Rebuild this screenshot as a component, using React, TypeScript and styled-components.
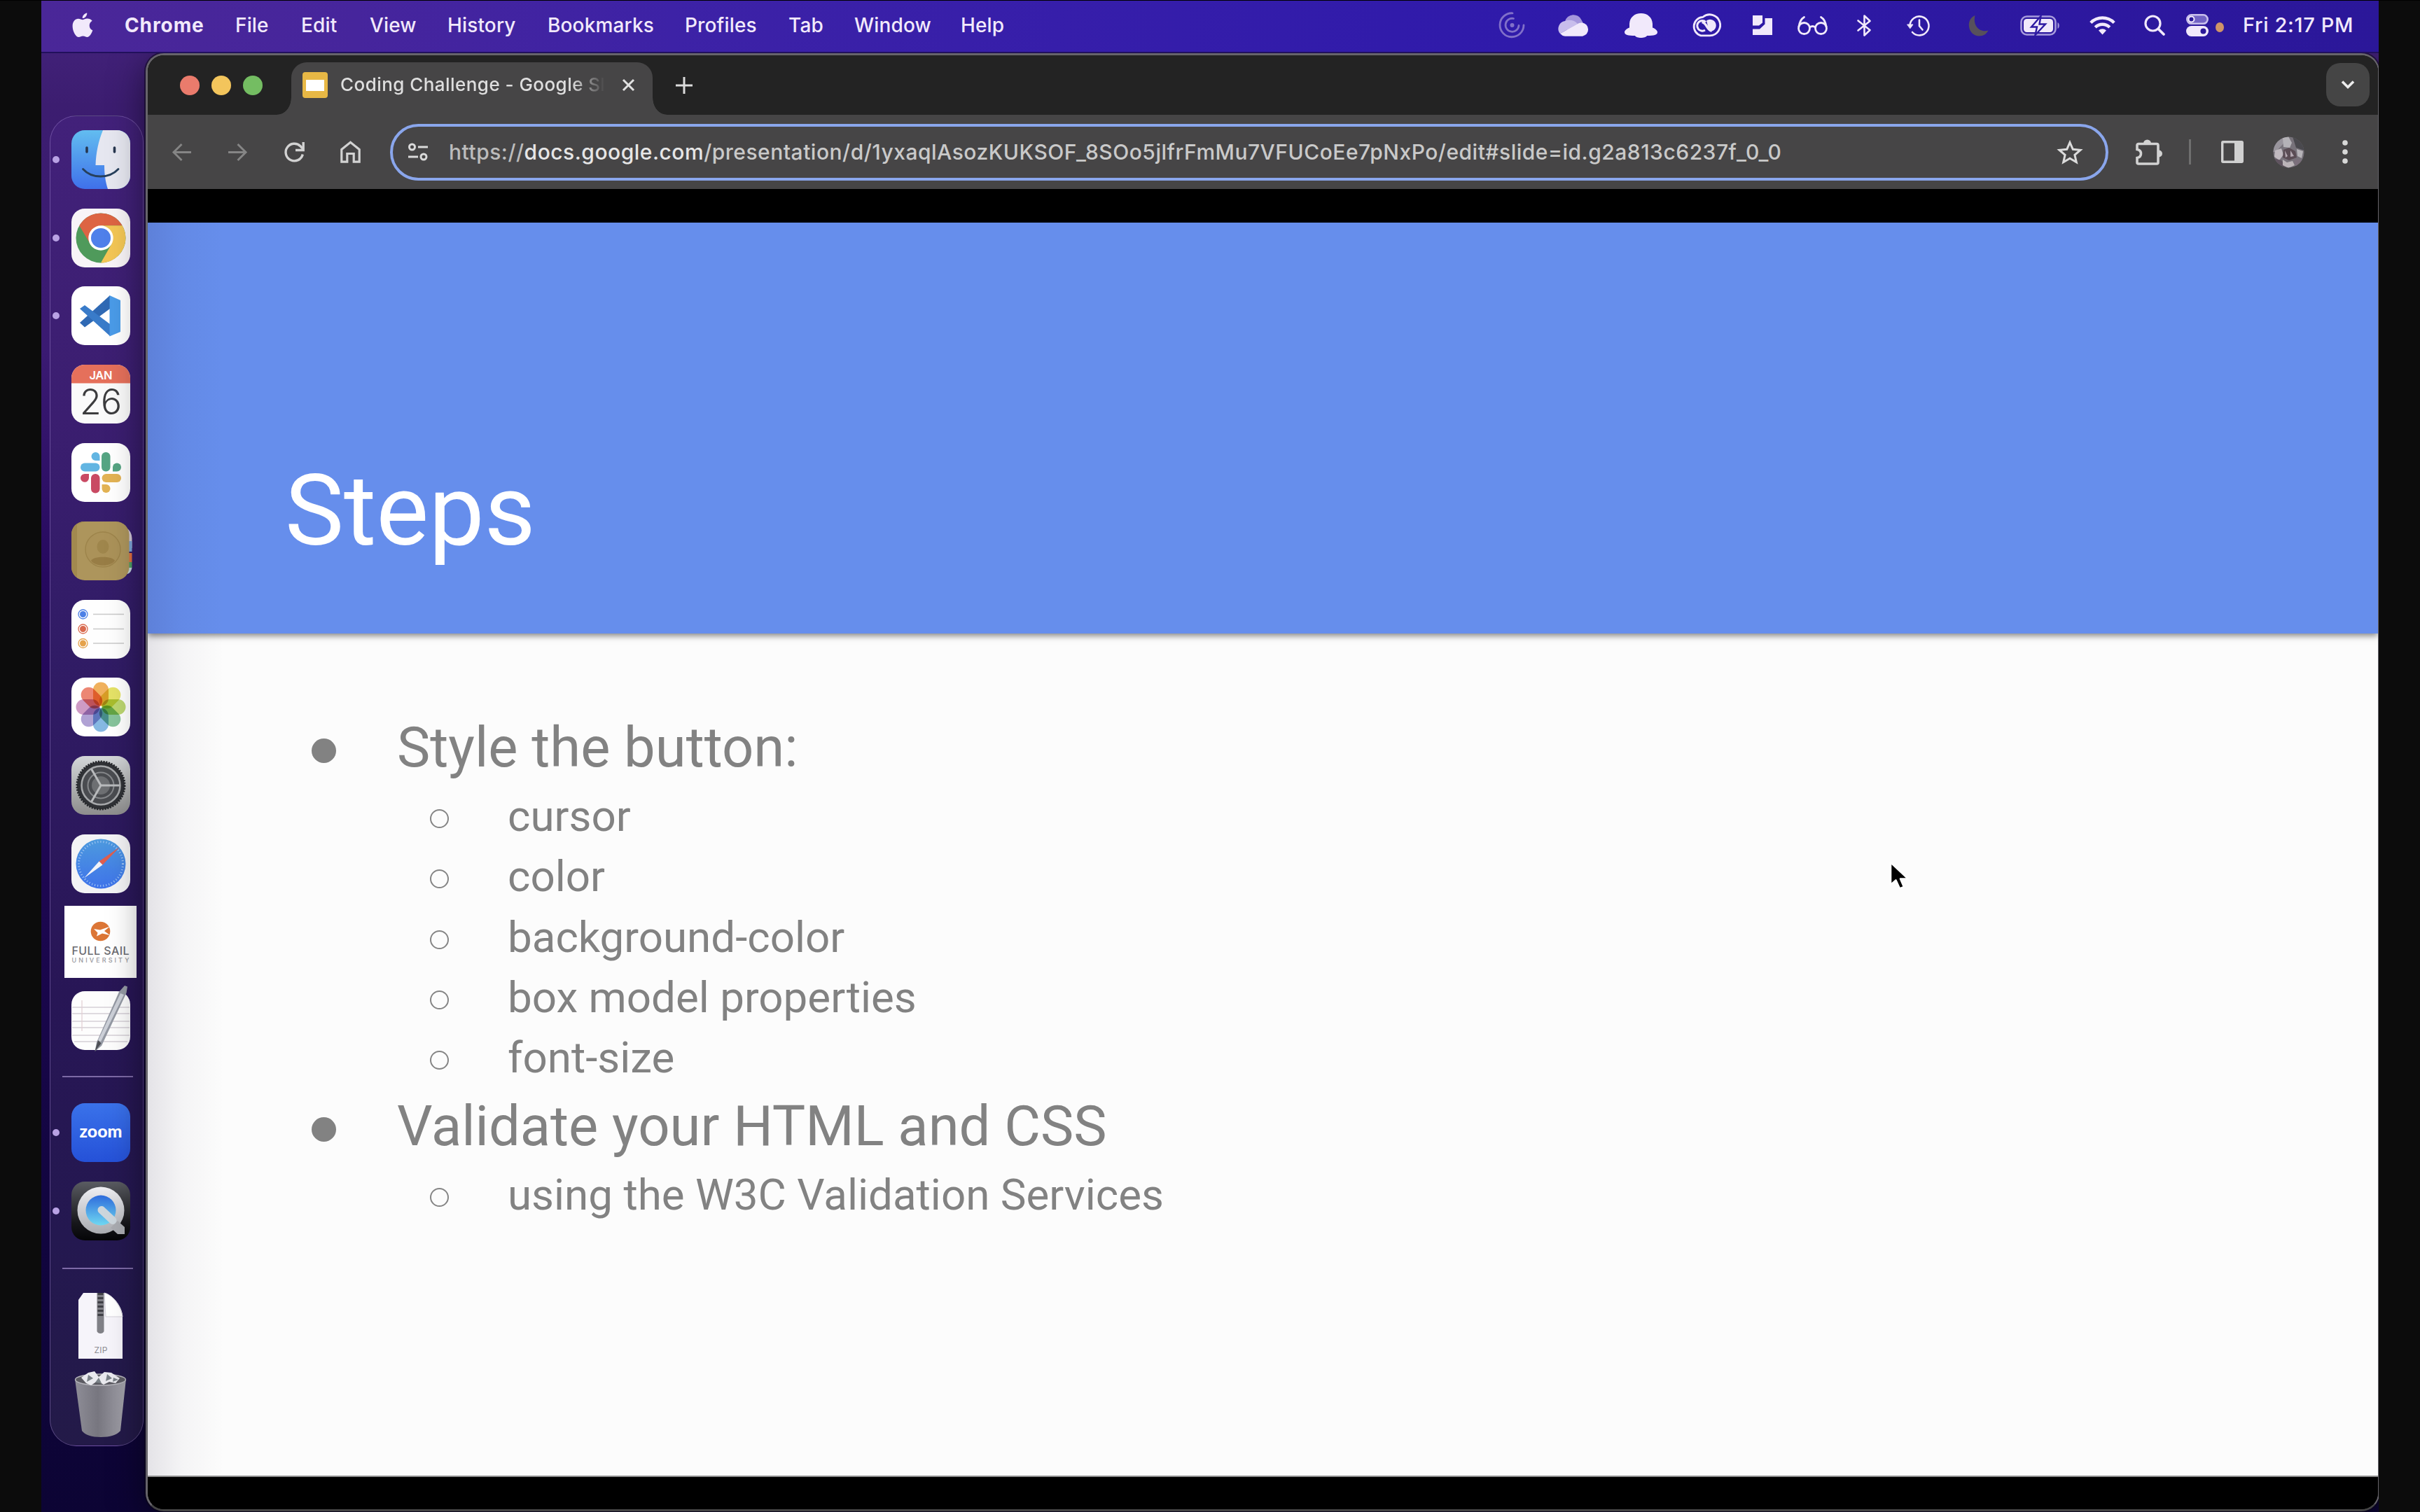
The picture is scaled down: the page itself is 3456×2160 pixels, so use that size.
import React from "react";
import styled, { createGlobalStyle } from "styled-components";

const GlobalStyle = createGlobalStyle`
  *, *::before, *::after { box-sizing: border-box; }
  html, body { margin: 0; background: #0c0c0c; }
  svg { display: block; flex: none; overflow: visible; }
`;

const Screen = styled.div`
  display: flex;
  width: 3456px;
  height: 2160px;
  overflow: hidden;
  border-top: 1px solid #000;
  padding: 0 59px;
  background: #0c0c0c;
  font-family: Inter, "Liberation Sans", sans-serif;
`;

const Desktop = styled.div`
  flex: 1;
  min-width: 0;
  display: flex;
  flex-direction: column;
  overflow: hidden;
  background: linear-gradient(180deg, #45247f 0, #3c1d70 150px, #3a1a72 500px, #26095e 820px, #1d0750 1250px, #120540 1700px, #0c0434 2159px);
`;

/* ---------- Menu bar ---------- */

const MenuBar = styled.header`
  flex: none;
  position: relative;
  display: flex;
  align-items: center;
  height: 75px;
  padding: 0 36px 3px 44px;
  color: #f1e9fb;
  background: linear-gradient(90deg, #4a2798 0, #46259c 450px, #3d22a6 900px, #361eaa 1450px, #2f1aaa 2100px, #2b1799 3338px);
  border-bottom: 2px solid #21105c;
`;

const AppleSlot = styled.div`
  width: 75px;
  flex: none;
`;

const MenuItem = styled.span<{ $step: number; $strong?: boolean }>`
  flex: none;
  width: ${(p) => p.$step}px;
  font-size: 28px;
  line-height: 34px;
  font-weight: ${(p) => (p.$strong ? 700 : 500)};
  letter-spacing: ${(p) => (p.$strong ? 0.9 : 0.15)}px;
  white-space: nowrap;
`;

const StatusArea = styled.div`
  display: flex;
  align-items: center;
  margin-left: auto;
`;

const StatusItem = styled.div<{ $gap: number }>`
  margin-left: ${(p) => p.$gap}px;
`;

const PrivacyDot = styled.div`
  width: 12px;
  height: 14px;
  margin: 5px 0 0 10px;
  border-radius: 50%;
  background: #d09468;
`;

const Clock = styled.time`
  width: 158px;
  margin-left: 27px;
  font-size: 29px;
  line-height: 34px;
  font-weight: 500;
  letter-spacing: 0.65px;
  white-space: nowrap;
`;

/* ---------- Dock ---------- */

const Workspace = styled.div`
  flex: 1;
  min-height: 0;
  display: flex;
`;

const DockColumn = styled.aside`
  flex: none;
  width: 149px;
  padding: 89px 3px 0 12px;
`;

const DockPanel = styled.div`
  height: 1901px;
  padding-top: 6px;
  border: 1.5px solid rgba(170, 140, 215, 0.42);
  border-radius: 38px;
  background: linear-gradient(180deg, #42217a 0, #3b1e70 430px, #311c66 750px, #281656 1250px, #241850 1600px, #231a48 1901px);
`;

const DockSlot = styled.div`
  display: grid;
  grid-template-columns: 11px 1fr;
  align-items: center;
  justify-items: center;
  height: 111.8px;
`;

const RunningDot = styled.span<{ $on?: boolean }>`
  width: 10px;
  height: 10px;
  margin-left: 4px;
  border-radius: 50%;
  background: ${(p) => (p.$on ? "#b9a2e4" : "transparent")};
`;

const DockDivider = styled.hr<{ $size: number }>`
  width: 101px;
  height: ${(p) => p.$size}px;
  margin: 0 0 0 17px;
  border: 0;
  background: linear-gradient(#7d6aa6, #7d6aa6) center / 100% 2px no-repeat;
`;

/* ---------- Browser window ---------- */

const BrowserWindow = styled.main`
  flex: 1;
  min-width: 0;
  display: flex;
  flex-direction: column;
  height: 2083px;
  margin-right: -1px;
  overflow: hidden;
  border: 3px solid #66646a;
  border-bottom-color: #444;
  border-right-width: 2px;
  border-radius: 26px;
  background: #000;
  box-shadow: 0 0 0 2px rgba(10, 5, 20, 0.5), 0 10px 50px rgba(0, 0, 0, 0.5);
`;

const TabStrip = styled.div`
  flex: none;
  display: flex;
  align-items: center;
  height: 85px;
  padding: 0 12px 0 46px;
  background: #232323;
`;

const TrafficLights = styled.div`
  display: flex;
  gap: 17px;
`;

const Light = styled.span<{ $color: string }>`
  width: 28px;
  height: 28px;
  border-radius: 50%;
  background: ${(p) => p.$color};
`;

const Tab = styled.div`
  position: relative;
  align-self: flex-end;
  display: flex;
  align-items: center;
  width: 516px;
  height: 75px;
  margin-left: 41px;
  padding: 0 26px 11px 16px;
  border-radius: 22px 22px 0 0;
  background: #464546;

  &::before,
  &::after {
    content: "";
    position: absolute;
    bottom: 0;
    width: 20px;
    height: 24px;
  }
  &::before {
    right: 100%;
    background: radial-gradient(ellipse 20px 24px at 0 0, transparent 97%, #464546);
  }
  &::after {
    left: 100%;
    background: radial-gradient(ellipse 20px 24px at 100% 0, transparent 97%, #464546);
  }
`;

const TabTitle = styled.span`
  flex: 1;
  margin-left: 18px;
  overflow: hidden;
  white-space: nowrap;
  color: #dedede;
  font-size: 26px;
  line-height: 36px;
  font-weight: 500;
  letter-spacing: 0.45px;
  mask-image: linear-gradient(90deg, #000 330px, transparent 378px);
`;

const NewTab = styled.div`
  margin: 0 0 0 33px;
`;

const TabSearch = styled.div`
  display: flex;
  align-items: center;
  justify-content: center;
  width: 62px;
  height: 62px;
  margin: -2px 0 0 auto;
  border-radius: 20px;
  background: #454545;
`;

const Toolbar = styled.div`
  flex: none;
  display: flex;
  align-items: center;
  height: 106px;
  padding: 0 42px 0 35px;
  background: #464546;
`;

const ToolSlot = styled.div<{ $before?: number }>`
  margin-left: ${(p) => p.$before ?? 0}px;
`;

const AddressBar = styled.div`
  display: flex;
  align-items: center;
  width: 2454px;
  height: 81px;
  margin-left: 42px;
  padding: 0 33px 0 22px;
  border: 4.5px solid #8aa6ec;
  border-radius: 41px;
`;

const Url = styled.span`
  flex: 1;
  margin-left: 30px;
  color: #c9c9c9;
  font-size: 30px;
  line-height: 40px;
  font-weight: 500;
  letter-spacing: 0.5px;
  white-space: nowrap;
`;

const UrlScheme = styled.span`
  color: #bcbcbc;
`;

const UrlHost = styled.span`
  color: #e6e6e6;
`;

const ToolbarRule = styled.div`
  width: 3px;
  height: 36px;
  margin-left: 38px;
  background: #6f6f6f;
`;

/* ---------- Slide ---------- */

const SlideFrame = styled.div`
  flex: 1;
  display: flex;
  flex-direction: column;
  padding-top: 48px;
  background: #000;
`;

const edgeShade = "linear-gradient(90deg, rgba(20, 10, 50, 0.1) 0, rgba(20, 10, 50, 0.03) 50px, transparent 110px)";

const SlideHeader = styled.div`
  position: relative;
  display: flex;
  align-items: flex-end;
  height: 587px;
  padding: 0 0 90px 196px;
  background: ${edgeShade}, #668eec;
  box-shadow: 0 3px 9px rgba(0, 0, 0, 0.5);
`;

const SlideTitle = styled.h1`
  margin: 0;
  color: #fff;
  font-family: Roboto, sans-serif;
  font-size: 141.5px;
  line-height: 170px;
  font-weight: 400;
`;

const SlideBody = styled.div`
  height: 1205px;
  padding: 108px 0 0 226px;
  background: ${edgeShade}, #fcfcfc;
  border-bottom: 2px solid #8c8c8c;
  color: #828282;
  font-family: Roboto, sans-serif;
`;

const Bullets = styled.ul`
  margin: 0;
  padding: 0;
  list-style: none;
`;

const Point = styled.div`
  display: flex;
  align-items: center;
  height: 110px;
  padding-left: 8px;
  font-size: 79.6px;
  line-height: 110px;
`;

const Disc = styled.span`
  width: 35px;
  height: 35px;
  margin: 8px 87px 0 0;
  border-radius: 50%;
  background: #828282;
`;

const SubPoint = styled.li`
  display: flex;
  align-items: center;
  height: 86.25px;
  padding-left: 177px;
  font-size: 61.9px;
  line-height: 86.25px;
`;

const Ring = styled.span`
  width: 27px;
  height: 27px;
  margin: 7px 84px 0 0;
  border: 2px solid #858585;
  border-radius: 50%;
`;

const Pointer = styled.div`
  position: absolute;
  left: 2698px;
  top: 1229px;
`;

/* ---------- Menu bar glyphs ---------- */

const ink = "#f1e9fb";

const AppleGlyph = () => (
  <svg width="30" height="36" viewBox="0 0 30 36" fill={ink}>
    <path d="M21.5 8.6c-2.800 0-4.300 1.600-6.200 1.600S11.200 8.700 8.700 8.700C4.500 8.700.6 12.300.6 19.200c0 7.500 4.700 15.800 8.800 15.800 2.200 0 3.400-1.400 6.200-1.400 2.700 0 3.700 1.400 6 1.400 3.300 0 6.400-5.300 7.700-9.700-2.800-1.200-4.600-3.500-4.600-6.800 0-3 1.600-5.300 4-6.700-1.800-2.200-4.300-3.200-7.200-3.200z" />
    <path d="M21.300.4c.2 3.800-2.800 7.500-6.600 7.700C14.400 4.600 17.600.8 21.300.4z" />
  </svg>
);

const SpiralGlyph = () => (
  <svg width="37" height="38" viewBox="0 0 37 38" fill="none" stroke="#8170c9" strokeWidth="2.800" strokeLinecap="round">
    <path d="M19 1.800A17 17 0 1 0 35 19" />
    <path d="M20.500 9.500A9.500 9.500 0 1 0 28 19.500" />
    <circle cx="18.500" cy="19" r="1.600" fill="#8170c9" />
  </svg>
);

const CloudGlyph = () => (
  <svg width="45" height="32" viewBox="0 0 45 32">
    <path d="M11 10.500A12.500 12.500 0 0 1 34.500 8.500L38 15 14 24z" fill="#a597dc" />
    <path d="M11 10A11 11 0 0 0 4 28l25-14C25 9 17 7.500 11 10z" fill="#c8bdec" />
    <path d="M4 28l26-14.500A9.800 9.800 0 0 1 35.500 12.500 9.700 9.700 0 0 1 36 31.700H11A10.500 10.500 0 0 1 4 28z" fill={ink} />
  </svg>
);

const BellGlyph = () => (
  <svg width="47" height="35" viewBox="0 0 47 35" fill={ink}>
    <path d="M23.500 0C33 0 39.500 6 40 15v5.500c4 1.500 7 4 7 6.500 0 4-5 5-15 5-1.500 4-15.500 4-17 0-10 0-15-1-15-5 0-2.500 3-5 7-6.500V15C7.500 6 14 0 23.500 0z" />
  </svg>
);

const CreativeCloudGlyph = () => (
  <svg width="45" height="34" viewBox="0 0 45 34" fill="none" stroke={ink}>
    <path d="M14 31.800h13a15 15 0 1 0-10-26.500A13.500 13.500 0 0 0 14 31.800z" strokeWidth="2.800" />
    <path d="M21 12.500a7.300 7.300 0 1 0-1 11.500" strokeWidth="3" />
    <path d="M15.500 12.500c7 1 7.500 12 14 12.500" strokeWidth="3.600" />
    <path d="M22 10.500a8.600 8.600 0 1 1 5 15.500c-2-4-3.500-9-5-15.500z" fill={ink} stroke="none" />
  </svg>
);

const TilesGlyph = () => (
  <svg width="28" height="28" viewBox="0 0 28 28" fill={ink}>
    <path d="M0 0h14v10.500L9 14.500H0z" />
    <path d="M17.500 4H28v24H0v-8.500h10l7.500-7z" />
  </svg>
);

const GlassesGlyph = () => (
  <svg width="43" height="27" viewBox="0 0 43 27" fill="none" stroke={ink} strokeWidth="2.800" strokeLinecap="round">
    <circle cx="9.500" cy="17.500" r="8" />
    <circle cx="33.500" cy="17.500" r="8" />
    <path d="M17.500 16q4-3 8 0M2 15C3 8 6 3.500 9.500 1.500M41 15C40 8 37 3.500 33.500 1.500" />
  </svg>
);

const BluetoothGlyph = () => (
  <svg width="21" height="31" viewBox="0 0 21 31" fill="none" stroke={ink} strokeWidth="2.600" strokeLinejoin="round" strokeLinecap="round">
    <path d="M1.500 8.500L18.500 22 10.500 29.500V1.500L18.500 9 1.500 22.500" />
  </svg>
);

const TimeMachineGlyph = () => (
  <svg width="33" height="31" viewBox="0 0 33 31" fill="none" stroke={ink} strokeWidth="2.600" strokeLinecap="round">
    <path d="M4.500 15.500A13.500 13.500 0 1 1 8 25" />
    <path d="M18 7.500v8.500l4.500 5.500" />
    <path d="M1 14h8l-4 5.500z" fill={ink} strokeWidth="1" />
  </svg>
);

const MoonGlyph = () => (
  <svg width="29" height="31" viewBox="0 0 29 31">
    <path d="M9.500 1C3 4 0 10 1 17c1 8 7 13.500 14.500 13.500 6 0 10.500-3 13-8C17 26 6 17 9.500 1z" fill="#57505c" />
  </svg>
);

const BatteryGlyph = () => (
  <svg width="57" height="29" viewBox="0 0 57 29">
    <rect x="1.500" y="1.500" width="49" height="26" rx="8" fill="none" stroke="#a79bdc" strokeWidth="2.600" />
    <rect x="5" y="5" width="42" height="19" rx="4.500" fill={ink} />
    <path d="M53.500 10v9c3-1.500 3-7.500 0-9z" fill="#a79bdc" />
    <path d="M29.500 1L16 16.500h8L21.500 28 36 12.500h-8.500z" fill={ink} stroke="#2d19a2" strokeWidth="2.400" />
  </svg>
);

const WifiGlyph = () => (
  <svg width="37" height="28" viewBox="0 0 37 28" fill="none" stroke={ink} strokeWidth="4.400">
    <path d="M1.800 10.500a23.500 23.500 0 0 1 33.400 0" />
    <path d="M8.200 17a14.500 14.500 0 0 1 20.600 0" />
    <path d="M18.500 27.500l-5.500-6a8 8 0 0 1 11 0z" fill={ink} stroke="none" />
  </svg>
);

const SearchGlyph = () => (
  <svg width="30" height="30" viewBox="0 0 30 30" fill="none" stroke={ink} strokeWidth="3.200" strokeLinecap="round">
    <circle cx="12.500" cy="12.500" r="10.500" />
    <path d="M20.500 20.500l7.500 7.500" strokeWidth="3.800" />
  </svg>
);

const ControlCentreGlyph = () => (
  <svg width="32" height="32" viewBox="0 0 32 32">
    <rect x="1.300" y="1.300" width="29.400" height="12.500" rx="6.200" fill="#7263c4" stroke="#c9c0ec" strokeWidth="2.600" />
    <circle cx="7.500" cy="7.500" r="4" fill="#2b1799" stroke={ink} strokeWidth="2" />
    <rect x="0" y="17" width="32" height="15" rx="7.500" fill={ink} />
    <circle cx="24.500" cy="24.500" r="4" fill="#2b1799" />
  </svg>
);

/* ---------- Browser glyphs ---------- */

const SlidesFavicon = () => (
  <svg width="36" height="37" viewBox="0 0 36 37">
    <rect width="36" height="37" rx="4" fill="#e8b845" />
    <rect x="5" y="11" width="26" height="16" fill="#fff" />
  </svg>
);

const CloseGlyph = () => (
  <svg width="17" height="17" viewBox="0 0 17 17" stroke="#e2e2e2" strokeWidth="3">
    <path d="M1 1l15 15M16 1L1 16" />
  </svg>
);

const PlusGlyph = () => (
  <svg width="24" height="24" viewBox="0 0 24 24" stroke="#dcdcdc" strokeWidth="3">
    <path d="M12 0v24M0 12h24" />
  </svg>
);

const ChevronGlyph = () => (
  <svg width="18" height="12" viewBox="0 0 18 12" fill="none" stroke="#ededed" strokeWidth="3.600">
    <path d="M1 1.500l8 8 8-8" />
  </svg>
);

const ArrowGlyph = ({ flip }: { flip?: boolean }) => (
  <svg width="27" height="27" viewBox="0 0 27 27" fill="none" stroke="#858585" strokeWidth="3">
    <path d={flip ? "M0 13.500h24M13.500 2L25 13.500 13.500 25" : "M27 13.500H3M13.500 2L2 13.500 13.500 25"} />
  </svg>
);

const ReloadGlyph = () => (
  <svg width="29" height="29" viewBox="0 0 29 29" fill="none" stroke="#d2d2d2" strokeWidth="3.400">
    <path d="M26.300 17.500A12.300 12.300 0 1 1 23 5.800L27 10" />
    <path d="M27.200 0v11.500H16" />
  </svg>
);

const HomeGlyph = () => (
  <svg width="29" height="32" viewBox="0 0 29 32" fill="none" stroke="#d2d2d2" strokeWidth="3.200">
    <path d="M1.800 12.500L14.500 2.300l12.700 10.200v17.700h-8V18.500h-9.400v11.700h-8z" />
  </svg>
);

const TuneGlyph = () => (
  <svg width="28" height="26" viewBox="0 0 28 26" fill="none" stroke="#dadada" strokeWidth="3">
    <circle cx="5.500" cy="6" r="4" />
    <path d="M14 6h14M0 20h14" />
    <circle cx="22" cy="20" r="4" />
  </svg>
);

const StarGlyph = () => (
  <svg width="36" height="34" viewBox="0 0 36 34" fill="none" stroke="#dcdcdc" strokeWidth="3">
    <path d="M18 3.500l4.300 9.800 10.700 1-8.100 7 2.400 10.400L18 26.200l-9.300 5.500 2.400-10.400-8.100-7 10.700-1z" />
  </svg>
);

const PuzzleGlyph = () => (
  <svg width="38" height="37" viewBox="0 0 38 37">
    <path d="M4 6.500h26a2 2 0 0 1 2 2v24.500a2 2 0 0 1-2 2H4a2 2 0 0 1-2-2v-6.500q5.500-1 5.500-6T2 14.500v-6a2 2 0 0 1 2-2z" fill="none" stroke="#d2d2d2" strokeWidth="3.600" />
    <path d="M11 6a5.500 5.500 0 0 1 11 0zM33 15.500a5 5 0 0 1 0 10z" fill="#d2d2d2" />
  </svg>
);

const SidePanelGlyph = () => (
  <svg width="32" height="32" viewBox="0 0 32 32">
    <rect x="1.700" y="1.700" width="28.600" height="28.600" rx="1" fill="none" stroke="#d0d0d0" strokeWidth="3.400" />
    <path d="M19 1h12v30H19z" fill="#d0d0d0" />
  </svg>
);

const Avatar = () => (
  <svg width="45" height="45" viewBox="0 0 45 45">
    <defs>
      <clipPath id="avatarClip"><circle cx="22.500" cy="22.500" r="22" /></clipPath>
    </defs>
    <g clipPath="url(#avatarClip)">
      <rect width="45" height="45" fill="#77727a" />
      <path d="M0 0h18l-3 10L4 22H0z" fill="#98949c" />
      <path d="M14 2l8-2 5 9-3 7-9-1z" fill="#b4b2b7" />
      <path d="M28 0l17 6v14l-12-4z" fill="#4a494e" />
      <path d="M3 20l9-3 3 9-6 8-7-5z" fill="#c0b9bf" />
      <path d="M34 18l9 3-2 10-6-3z" fill="#b6b3b8" />
      <path d="M15 19l8-3 9 5 2 9-11 4-9-4z" fill="#5a4c54" />
      <path d="M17 20l4 8-3 2zM25 20l5 8-5 1z" fill="#b5a9b2" />
      <path d="M0 31l12 3 9 11H0z" fill="#605460" />
      <path d="M14 33l6 4 8-2 3 6-9 4-8-4z" fill="#bbb4b8" />
      <path d="M30 32l11 2-6 10-4-3z" fill="#7b6f7b" />
    </g>
  </svg>
);

const DotsGlyph = () => (
  <svg width="8" height="34" viewBox="0 0 8 34" fill="#d8d8d8">
    <circle cx="4" cy="4" r="3.800" />
    <circle cx="4" cy="17" r="3.800" />
    <circle cx="4" cy="30" r="3.800" />
  </svg>
);

/* ---------- Dock icons ---------- */

const Tile = ({ fill, id, children }: { fill: string; id: string; children?: React.ReactNode }) => (
  <svg width="84" height="84" viewBox="0 0 84 84">
    <clipPath id={`${id}Tile`}><rect width="84" height="84" rx="19" /></clipPath>
    <g clipPath={`url(#${id}Tile)`}>
      <rect width="84" height="84" fill={fill} />
      {children}
    </g>
  </svg>
);

const FinderIcon = () => (
  <Tile id="finder" fill="url(#finderBlue)">
    <linearGradient id="finderBlue" x1="0" y1="0" x2="0" y2="1">
      <stop offset="0" stopColor="#62bdf0" />
      <stop offset="1" stopColor="#3f70ea" />
    </linearGradient>
    <path d="M45 0C39 14 35 32 34.500 50H47c0 12 1.500 24 5 34h32V0z" fill="#e6e7f0" />
    <path d="M22 25v6M61.500 25v6" stroke="#27364f" strokeWidth="3.600" strokeLinecap="round" />
    <path d="M16.500 55.500C29 69.500 54 69.500 67 55.500" fill="none" stroke="#27405c" strokeWidth="2.800" strokeLinecap="round" />
  </Tile>
);

const ChromeIcon = () => (
  <Tile id="chrome" fill="#f8f4f7">
    <circle cx="42" cy="42" r="35.500" fill="#4f9a5b" />
    <path d="M11.300 24.300A35.500 35.500 0 0 1 72.700 24.300H42L27 50.700z" fill="#dd6443" />
    <path d="M72.700 24.300A35.500 35.500 0 0 1 42 77.500l15.200-26.700L42 24.300z" fill="#f3c655" />
    <circle cx="42" cy="42" r="17.700" fill="#fff" />
    <circle cx="42" cy="42" r="14" fill="#4f80ea" />
  </Tile>
);

const CodeIcon = () => (
  <Tile id="code" fill="#fff">
    <path d="M12 52l43-39v19L19 58.500z" fill="#2f69b4" />
    <path d="M12 32l7-5 36 27v17z" fill="#397bc9" />
    <path d="M54.500 13L70 20v45l-15.500 6.500z" fill="#4a9be8" />
  </Tile>
);

const CalendarIcon = () => (
  <Tile id="calendar" fill="#fafafa">
    <rect width="84" height="26.500" fill="#e5705b" />
    <text x="42" y="20.500" textAnchor="middle" fontSize="16.500" fontWeight="600" fill="#fff" textLength="33">JAN</text>
    <text x="42" y="70.500" textAnchor="middle" fontSize="50" fontWeight="300" fill="#3c3c3e" textLength="60">26</text>
  </Tile>
);

const SlackIcon = () => (
  <Tile id="slack" fill="#fff">
    <g fill="#62b5e2">
      <path d="M34.500 13a6 6 0 0 1 6 6v6h-6a6 6 0 0 1 0-12z" />
      <rect x="13" y="28.500" width="27.500" height="12" rx="6" />
    </g>
    <g fill="#56a583">
      <rect x="43" y="13" width="12.500" height="27.500" rx="6" />
      <path d="M65 28.500a6 6 0 1 1 0 12h-6v-6a6 6 0 0 1 6-6z" />
    </g>
    <g fill="#c94a63">
      <path d="M13 49.500a6 6 0 0 1 6-5.500h6v6a6 6 0 1 1-12-.5z" />
      <rect x="28" y="44" width="12.500" height="27.500" rx="6" />
    </g>
    <g fill="#e3b354">
      <rect x="43.500" y="44" width="27.500" height="12" rx="6" />
      <path d="M43.500 59h6a6 6 0 1 1-6 6z" />
    </g>
  </Tile>
);

const ContactsIcon = () => (
  <svg width="84" height="84" viewBox="0 0 84 84">
    <path d="M76 8q10 4 10.500 16v14H76z" fill="#cfc6d4" />
    <path d="M80 28h6.500v15H80z" fill="#7aa3d8" />
    <path d="M80 45h6.500v13H80z" fill="#e0703f" />
    <path d="M80 58h6.500v8H80z" fill="#4f9f62" />
    <path d="M78 66h8.500q-1 7-6.500 9z" fill="#bfd2d8" />
    <rect width="82.500" height="84" rx="19" fill="#ad955c" />
    <path d="M19 0h-1A18 18 0 0 0 0 19v46a19 19 0 0 0 8 15V4z" fill="#a2894f" />
    <circle cx="45" cy="40" r="25" fill="#ab9259" stroke="#9d844b" strokeWidth="1.400" />
    <ellipse cx="45" cy="36" rx="8.500" ry="10" fill="#9f864c" />
    <path d="M28 56c3-7 31-7 34 0-6 9-28 9-34 0z" fill="#987d45" />
  </svg>
);

const reminderRows = [
  { y: 20.500, color: "#4c80e6" },
  { y: 41.500, color: "#d96a4f" },
  { y: 62, color: "#e5a24b" },
];

const RemindersIcon = () => (
  <Tile id="reminders" fill="#fefefe">
    {reminderRows.map((r) => (
      <g key={r.y}>
        <circle cx="16.500" cy={r.y} r="6.500" fill="none" stroke={r.color} strokeWidth="1.300" />
        <circle cx="16.500" cy={r.y} r="4.500" fill={r.color} />
        <path d={`M31 ${r.y}h44`} stroke="#c9c9c9" strokeWidth="1.400" />
      </g>
    ))}
  </Tile>
);

const petals = ["#efaa50", "#e3e05a", "#b6d364", "#7dbf94", "#7cb2df", "#a99ad0", "#ca92c0", "#ea7d68"];

const Petal = styled.rect`
  mix-blend-mode: multiply;
`;

const PhotosIcon = () => (
  <Tile id="photos" fill="#fff">
    {petals.map((c, i) => (
      <Petal key={c} x="31" y="6.500" width="22" height="34" rx="11" fill={c} fillOpacity="0.92" transform={`rotate(${i * 45} 42 42)`} />
    ))}
  </Tile>
);

const SettingsIcon = () => (
  <Tile id="settings" fill="url(#settingsGrey)">
    <linearGradient id="settingsGrey" x1="0" y1="0" x2="0" y2="1">
      <stop offset="0" stopColor="#d3d6d8" />
      <stop offset="1" stopColor="#8d8d8d" />
    </linearGradient>
    <circle cx="42" cy="42" r="34" fill="#303236" stroke="#26282c" strokeWidth="3" strokeDasharray="2.200 1.600" />
    <circle cx="42" cy="42" r="27.500" fill="#4a4c50" stroke="#a6a8aa" strokeWidth="2.600" />
    <circle cx="42" cy="42" r="18.500" fill="none" stroke="#85878a" strokeWidth="2" />
    <circle cx="42" cy="42" r="13" fill="#6d6f72" />
    <g stroke="#b8babc" strokeWidth="3">
      <path d="M42 42h27M42 42L28.500 18.500M42 42L28.500 65.500" />
    </g>
  </Tile>
);

const SafariIcon = () => (
  <Tile id="safari" fill="#f3f3f5">
    <linearGradient id="safariBlue" x1="0" y1="0" x2="0" y2="1">
      <stop offset="0" stopColor="#4d9ade" />
      <stop offset="1" stopColor="#3f73ea" />
    </linearGradient>
    <circle cx="42" cy="42" r="35.500" fill="url(#safariBlue)" />
    <circle cx="42" cy="42" r="31.500" fill="none" stroke="#a9cbf4" strokeWidth="3" strokeDasharray="1 3.100" />
    <path d="M69 18L39.500 38.500l5 5z" fill="#df5e4e" />
    <path d="M18 62.500L39.500 38.500l5 5z" fill="#f2f3f8" />
  </Tile>
);

const FullSailIcon = () => (
  <svg width="103" height="103" viewBox="0 0 103 103">
    <rect width="103" height="103" fill="#fff" />
    <circle cx="51.500" cy="36.500" r="13.800" fill="#dc7636" />
    <path d="M42 33l9 1.500 14-5-8 6.500 8 6-11-2.500-8 4 1.500-5z" fill="#fff" />
    <text x="10.500" y="70" fontSize="16" fontWeight="500" fill="#6b6b70" textLength="82">FULL SAIL</text>
    <text x="10.500" y="80.500" fontSize="9" fontWeight="500" fill="#98989d" textLength="82">UNIVERSITY</text>
  </svg>
);

const TextEditIcon = () => (
  <svg width="84" height="84" viewBox="0 0 84 84">
    <rect width="84" height="84" rx="19" fill="#fdfdfd" />
    <path d="M1 23h82M1 32h82M1 43h82M1 52h82M1 63h82M4 72h76" stroke="#d5cfd6" strokeWidth="1.300" />
    <path d="M15 13v44" stroke="#e2cfd2" strokeWidth="1.200" />
    <path d="M68 1l8-9 4 1.500-1.500 9L43 78l-9.500 8L36 73z" fill="#9499a3" />
    <path d="M70 3l5 2L42 72l-4-1.500z" fill="#ccd0d8" />
    <path d="M38 70l4.500 4.500-9 11.500z" fill="#4e5056" />
  </svg>
);

const ZoomIcon = () => (
  <Tile id="zoom" fill="url(#zoomBlue)">
    <linearGradient id="zoomBlue" x1="0" y1="0" x2="0" y2="1">
      <stop offset="0" stopColor="#3a72ea" />
      <stop offset="1" stopColor="#2551d8" />
    </linearGradient>
    <text transform="translate(11.500 49) scale(1.130 0.860)" x="0" y="0" fontSize="28" fontFamily="Lato" fontWeight="900" fill="#fff" textLength="54" lengthAdjust="spacingAndGlyphs">zoom</text>
  </Tile>
);

const QuickTimeIcon = () => (
  <Tile id="quicktime" fill="url(#quicktimeDark)">
    <linearGradient id="quicktimeDark" x1="0" y1="0" x2="0" y2="1">
      <stop offset="0" stopColor="#5a5c62" />
      <stop offset="0.7" stopColor="#17171b" />
      <stop offset="1" stopColor="#050507" />
    </linearGradient>
    <linearGradient id="quicktimeRing" x1="0" y1="0" x2="0" y2="1">
      <stop offset="0" stopColor="#eeeef2" />
      <stop offset="1" stopColor="#a9abb0" />
    </linearGradient>
    <linearGradient id="quicktimeLens" x1="0" y1="0" x2="0" y2="1">
      <stop offset="0" stopColor="#2e6bdc" />
      <stop offset="1" stopColor="#6fd8f2" />
    </linearGradient>
    <circle cx="42" cy="41" r="33.500" fill="url(#quicktimeRing)" />
    <path d="M56 66l10-10 10 9v10H66z" fill="#a9abb0" />
    <circle cx="42" cy="41" r="21.500" fill="url(#quicktimeLens)" />
    <path d="M43 40.500l16 15" stroke="#cdd6dc" strokeWidth="11" strokeLinecap="round" />
  </Tile>
);

const ZipIcon = () => (
  <svg width="63" height="95" viewBox="0 0 63 95">
    <path d="M7 0h31c11 3 24 19 25 32v62H0V10z" fill="#f6f4fa" />
    <path d="M37 0c12 3 24 19 26 34H39z" fill="#fff" stroke="#d4d2da" strokeWidth="1" />
    <path d="M26.500 0h10v55q-1.500 3-5 3t-5-3z" fill="#808086" />
    <path d="M31.500 0v34" stroke="#3f3f45" strokeWidth="8" strokeDasharray="3 3" />
    <text x="32" y="86" textAnchor="middle" fontSize="12" fill="#8c8c92" textLength="19">ZIP</text>
  </svg>
);

const TrashIcon = () => (
  <svg width="73" height="94" viewBox="0 0 73 94">
    <linearGradient id="trashBody" x1="0" y1="0" x2="1" y2="0">
      <stop offset="0" stopColor="#8e8d97" />
      <stop offset="0.45" stopColor="#77767f" />
      <stop offset="1" stopColor="#a3a2ab" />
    </linearGradient>
    <path d="M0 11h73l-8 74q-8 9-28 9t-27-9z" fill="url(#trashBody)" />
    <ellipse cx="36.500" cy="12" rx="36" ry="8" fill="#5c5b63" stroke="#b5b4bb" strokeWidth="1.500" />
    <path d="M9 9l10-7 9-2 6 8 8-7 10 1 12 8-6 7-9-2-8 4-9-5-9 6-7-3z" fill="#e9e9ee" />
    <path d="M19 5l7 5-9 5zM34 9l4 8-9-1zM46 4l7 6-9 4zM55 9l7 3-8 3z" fill="#7b8288" />
  </svg>
);

/* ---------- Data ---------- */

const menus = [
  { label: "File", step: 94 },
  { label: "Edit", step: 98 },
  { label: "View", step: 111 },
  { label: "History", step: 143 },
  { label: "Bookmarks", step: 196 },
  { label: "Profiles", step: 148 },
  { label: "Tab", step: 94 },
  { label: "Window", step: 152 },
  { label: "Help", step: 70 },
];

const statusIcons = [
  { Glyph: SpiralGlyph, gap: 0 },
  { Glyph: CloudGlyph, gap: 46 },
  { Glyph: BellGlyph, gap: 51 },
  { Glyph: CreativeCloudGlyph, gap: 48 },
  { Glyph: TilesGlyph, gap: 43 },
  { Glyph: GlassesGlyph, gap: 36 },
  { Glyph: BluetoothGlyph, gap: 42 },
  { Glyph: TimeMachineGlyph, gap: 50 },
  { Glyph: MoonGlyph, gap: 55 },
  { Glyph: BatteryGlyph, gap: 45 },
  { Glyph: WifiGlyph, gap: 42 },
  { Glyph: SearchGlyph, gap: 41 },
  { Glyph: ControlCentreGlyph, gap: 30 },
];

const apps = [
  { Icon: FinderIcon, on: true },
  { Icon: ChromeIcon, on: true },
  { Icon: CodeIcon, on: true },
  { Icon: CalendarIcon },
  { Icon: SlackIcon },
  { Icon: ContactsIcon },
  { Icon: RemindersIcon },
  { Icon: PhotosIcon },
  { Icon: SettingsIcon },
  { Icon: SafariIcon },
  { Icon: FullSailIcon },
  { Icon: TextEditIcon },
];

const recentApps = [
  { Icon: ZoomIcon, on: true },
  { Icon: QuickTimeIcon, on: true },
];

const stacks = [{ Icon: ZipIcon }, { Icon: TrashIcon }];

const steps = [
  { text: "Style the button:", items: ["cursor", "color", "background-color", "box model properties", "font-size"] },
  { text: "Validate your HTML and CSS", items: ["using the W3C Validation Services"] },
];

type DockApp = { Icon: () => React.JSX.Element; on?: boolean };

const DockGroup = ({ items }: { items: DockApp[] }) => (
  <>
    {items.map(({ Icon, on }, i) => (
      <DockSlot key={i}>
        <RunningDot $on={on} />
        <Icon />
      </DockSlot>
    ))}
  </>
);

export default function App() {
  return (
    <Screen>
      <GlobalStyle />
      <Desktop>
        <MenuBar>
          <AppleSlot><AppleGlyph /></AppleSlot>
          <MenuItem $step={158} $strong>Chrome</MenuItem>
          {menus.map((m) => (
            <MenuItem key={m.label} $step={m.step}>{m.label}</MenuItem>
          ))}
          <StatusArea>
            {statusIcons.map(({ Glyph, gap }, i) => (
              <StatusItem key={i} $gap={gap}><Glyph /></StatusItem>
            ))}
            <PrivacyDot />
            <Clock>Fri 2:17 PM</Clock>
          </StatusArea>
        </MenuBar>

        <Workspace>
          <DockColumn>
            <DockPanel>
              <DockGroup items={apps} />
              <DockDivider $size={49} />
              <DockGroup items={recentApps} />
              <DockDivider $size={52} />
              <DockGroup items={stacks} />
            </DockPanel>
          </DockColumn>

          <BrowserWindow>
            <TabStrip>
              <TrafficLights>
                <Light $color="#ea7b6c" />
                <Light $color="#f3c55c" />
                <Light $color="#74bd62" />
              </TrafficLights>
              <Tab>
                <SlidesFavicon />
                <TabTitle>Coding Challenge - Google Sl</TabTitle>
                <CloseGlyph />
              </Tab>
              <NewTab><PlusGlyph /></NewTab>
              <TabSearch><ChevronGlyph /></TabSearch>
            </TabStrip>

            <Toolbar>
              <ToolSlot><ArrowGlyph /></ToolSlot>
              <ToolSlot $before={53}><ArrowGlyph flip /></ToolSlot>
              <ToolSlot $before={53}><ReloadGlyph /></ToolSlot>
              <ToolSlot $before={51}><HomeGlyph /></ToolSlot>
              <AddressBar>
                <TuneGlyph />
                <Url>
                  <UrlScheme>https://</UrlScheme>
                  <UrlHost>docs.google.com</UrlHost>
                  /presentation/d/1yxaqlAsozKUKSOF_8SOo5jlfrFmMu7VFUCoEe7pNxPo/edit#slide=id.g2a813c6237f_0_0
                </Url>
                <StarGlyph />
              </AddressBar>
              <ToolSlot $before={39}><PuzzleGlyph /></ToolSlot>
              <ToolbarRule />
              <ToolSlot $before={43}><SidePanelGlyph /></ToolSlot>
              <ToolSlot $before={42}><Avatar /></ToolSlot>
              <ToolSlot $before={54}><DotsGlyph /></ToolSlot>
            </Toolbar>

            <SlideFrame>
              <SlideHeader>
                <SlideTitle>Steps</SlideTitle>
              </SlideHeader>
              <SlideBody>
                {steps.map((s) => (
                  <section key={s.text}>
                    <Point><Disc />{s.text}</Point>
                    <Bullets>
                      {s.items.map((t) => (
                        <SubPoint key={t}><Ring />{t}</SubPoint>
                      ))}
                    </Bullets>
                  </section>
                ))}
              </SlideBody>
            </SlideFrame>
          </BrowserWindow>
        </Workspace>
      </Desktop>

      <Pointer>
        <svg width="30" height="44" viewBox="0 0 30 44">
          <path d="M2 3v32l7.500-6.500 5.500 12 6-2.500-5-11.500H27z" fill="#000" stroke="#fff" strokeWidth="2.600" strokeLinejoin="round" />
        </svg>
      </Pointer>
    </Screen>
  );
}
